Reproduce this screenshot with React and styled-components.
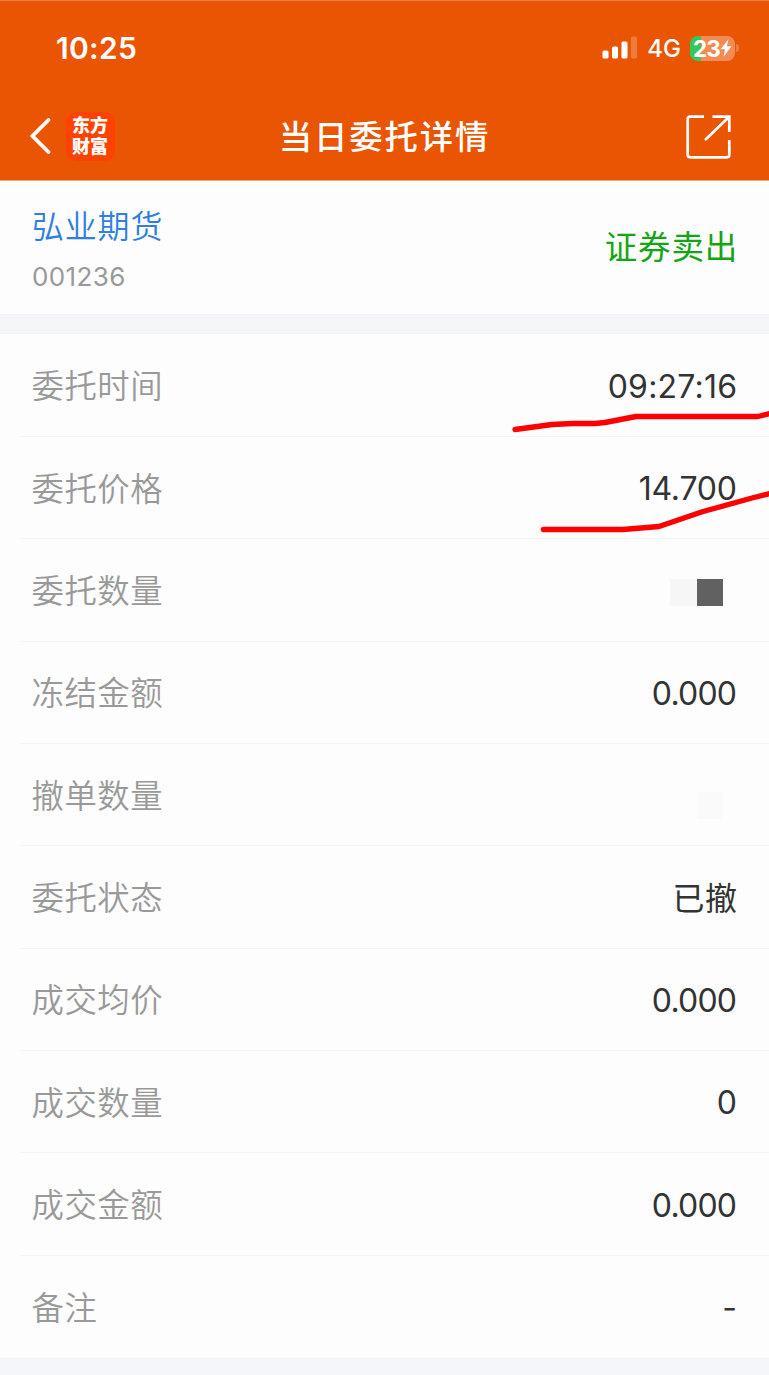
import React from 'react';
import styled, { createGlobalStyle } from 'styled-components';

const GlobalStyle = createGlobalStyle`
  * {
    box-sizing: border-box;
  }
  body {
    margin: 0;
    background: #fdfdfd;
    font-family: Inter, 'Noto Sans CJK SC', sans-serif;
    -webkit-font-smoothing: antialiased;
  }
`;

const Screen = styled.main`
  position: relative;
  width: 769px;
  height: 1375px;
  overflow: hidden;
  background: #fdfdfd;
`;

const Header = styled.header`
  height: 181px;
  background: #ea5504;
  border-top: 1px solid #ef7c40;
  border-bottom: 1px solid #f5a57a;
  color: #fff;
`;

const StatusBar = styled.div`
  display: flex;
  align-items: center;
  justify-content: space-between;
  height: 93px;
  padding: 0 30px 0 56px;
`;

const Clock = styled.span`
  font-size: 30px;
  font-weight: 600;
  letter-spacing: 0.3px;
`;

const StatusIcons = styled.div`
  display: flex;
  align-items: center;
  padding-top: 1px;
`;

const Network = styled.span`
  margin: 1px 9px 0 9px;
  font-size: 24px;
  font-weight: 500;
  line-height: 30px;
`;

const Battery = styled.span`
  display: flex;
  align-items: center;
  justify-content: center;
  width: 45px;
  height: 25px;
  border-radius: 8px;
  background: linear-gradient(to right, #34c759 10.5px, #f28b54 10.5px);
  font-size: 22.5px;
  font-weight: 700;
  letter-spacing: -0.8px;
`;

const BatteryCap = styled.span`
  width: 3px;
  height: 8px;
  margin-left: 1px;
  border-radius: 0 4px 4px 0;
  background: #f07a3d;
`;

const NavBar = styled.div`
  display: grid;
  grid-template-columns: 1fr auto 1fr;
  align-items: center;
  height: 84px;
  padding: 0 38px 0 30px;
`;

const NavLeft = styled.div`
  display: flex;
  align-items: center;
  gap: 15px;
`;

const Logo = styled.div`
  width: 49px;
  height: 49px;
  padding: 4px 0 0 6px;
  border-radius: 10px;
  background: #ff4200;
  font-family: 'Liberation Sans', 'Noto Sans CJK SC', sans-serif;
  font-size: 18px;
  font-weight: 900;
  line-height: 21px;
`;

const Title = styled.h1`
  margin: -2px -8px 0 0;
  font-family: 'Noto Sans CJK SC', sans-serif;
  font-size: 33.4px;
  font-weight: 500;
  line-height: 48px;
  letter-spacing: 1.9px;
`;

const NavRight = styled.div`
  display: flex;
  justify-content: flex-end;
  padding-top: 1px;
`;

const Summary = styled.section`
  display: flex;
  align-items: center;
  justify-content: space-between;
  height: 133px;
  padding: 0 31px 0 32px;
`;

const StockName = styled.div`
  margin-top: 4px;
  color: #2f7fe0;
  font-size: 32px;
  font-weight: 350;
  line-height: 48px;
  letter-spacing: 0.8px;
`;

const StockCode = styled.div`
  margin-top: 6px;
  color: #999;
  font-size: 26px;
  line-height: 40px;
  letter-spacing: 0.4px;
`;

const Side = styled.div`
  color: #14a514;
  font-size: 32.5px;
  line-height: 48px;
  letter-spacing: 0.8px;
`;

const Divider = styled.div`
  height: ${(props) => props.$height}px;
  background: #f5f6f9;
  border-top: 1px solid #f1f2f5;
  border-bottom: ${(props) => (props.$last ? 'none' : '1px solid #f1f2f5')};
`;

const Rows = styled.section`
  padding-top: 0.6px;
`;

const Row = styled.div`
  display: flex;
  align-items: center;
  justify-content: space-between;
  height: 102.35px;
  margin-left: 20px;
  padding: 3px 32px 0 11.5px;
  border-bottom: ${(props) => (props.$last ? 'none' : '1px solid #f5f5f6')};
`;

const Label = styled.span`
  padding-top: 1px;
  color: #999;
  font-size: 32.4px;
  font-weight: 350;
  line-height: 48px;
  letter-spacing: 0.5px;
`;

const Value = styled.span`
  margin-right: ${(props) => -(props.$spacing || 0)}px;
  padding-top: ${(props) => props.$top || 0}px;
  color: #333;
  font-size: 32px;
  line-height: 48px;
  letter-spacing: ${(props) => props.$spacing || 0}px;
`;

const Mosaic = styled.span`
  display: flex;
  margin: ${(props) => props.$top}px 14px 0 0;
`;

const Block = styled.i`
  width: 26.5px;
  height: 27px;
  background: ${(props) => props.$color};
`;

const Marks = styled.svg`
  position: absolute;
  top: 0;
  left: 0;
  pointer-events: none;
`;

const rows = [
  { label: '委托时间', value: '09:27:16', spacing: 0.2 },
  { label: '委托价格', value: '14.700', spacing: -0.2 },
  { label: '委托数量', blocks: ['#f6f6f6', '#616161'], top: 3 },
  { label: '冻结金额', value: '0.000', spacing: -0.8 },
  { label: '撤单数量', blocks: ['#fafafa'], top: 18 },
  { label: '委托状态', value: '已撤', spacing: 0.6, top: 2 },
  { label: '成交均价', value: '0.000', spacing: -0.8 },
  { label: '成交数量', value: '0' },
  { label: '成交金额', value: '0.000', spacing: -0.8 },
  { label: '备注', value: '-' },
];

const SignalIcon = () => (
  <svg width="36" height="24" viewBox="0 0 36 24" fill="#fff">
    <rect x="0.5" y="14.5" width="6" height="8" rx="1.5" />
    <rect x="10" y="10.5" width="6" height="12" rx="1.5" />
    <rect x="19.5" y="5.5" width="6" height="17" rx="1.5" />
    <rect x="29" y="0.5" width="6" height="22" rx="1.5" opacity="0.22" />
  </svg>
);

const BoltIcon = () => (
  <svg width="12" height="18" viewBox="0 0 11 18" fill="#fff">
    <path d="M8 0.3 0 10.2h4.5L3 17.7 11 7.3H6.3z" />
  </svg>
);

const BackIcon = () => (
  <svg width="21" height="36" viewBox="0 0 21 36" fill="none" stroke="#fff" strokeWidth="3.8">
    <path d="M18.5 2 2.5 18l16 16" strokeLinecap="round" strokeLinejoin="miter" />
  </svg>
);

const ShareIcon = () => (
  <svg width="45" height="44" viewBox="0 0 45 44" fill="none" stroke="#fff" strokeWidth="2.7">
    <path d="M18 1.7H4.2a2.5 2.5 0 0 0-2.5 2.5v35.6a2.5 2.5 0 0 0 2.5 2.5h36.6a2.5 2.5 0 0 0 2.5-2.5V25" />
    <path d="M26.5 1.7h16.8V17M43 2 19 25" />
  </svg>
);

const App = () => (
  <>
    <GlobalStyle />
    <Screen>
      <Header>
        <StatusBar>
          <Clock>10:25</Clock>
          <StatusIcons>
            <SignalIcon />
            <Network>4G</Network>
            <Battery>
              23
              <BoltIcon />
            </Battery>
            <BatteryCap />
          </StatusIcons>
        </StatusBar>
        <NavBar>
          <NavLeft>
            <BackIcon />
            <Logo>
              东方
              <br />
              财富
            </Logo>
          </NavLeft>
          <Title>当日委托详情</Title>
          <NavRight>
            <ShareIcon />
          </NavRight>
        </NavBar>
      </Header>
      <Summary>
        <div>
          <StockName>弘业期货</StockName>
          <StockCode>001236</StockCode>
        </div>
        <Side>证券卖出</Side>
      </Summary>
      <Divider $height={20} />
      <Rows>
        {rows.map((row, i) => (
          <Row key={row.label} $last={i === rows.length - 1}>
            <Label>{row.label}</Label>
            {row.blocks ? (
              <Mosaic $top={row.top}>
                {row.blocks.map((color) => (
                  <Block key={color} $color={color} />
                ))}
              </Mosaic>
            ) : (
              <Value $spacing={row.spacing} $top={row.top}>
                {row.value}
              </Value>
            )}
          </Row>
        ))}
      </Rows>
      <Divider $height={17} $last />
      <Marks width="769" height="1375" fill="none" stroke="#fe0000" strokeWidth="5.4" strokeLinecap="round" strokeLinejoin="round">
        <path d="M515 429.5 552 424.5 573 423.5H595L605 422.5 636 416.5H758L772 413" />
        <path d="M543.5 529.5H623L659 526.5 703 511.5 752 498 772 493" />
      </Marks>
    </Screen>
  </>
);

export default App;
